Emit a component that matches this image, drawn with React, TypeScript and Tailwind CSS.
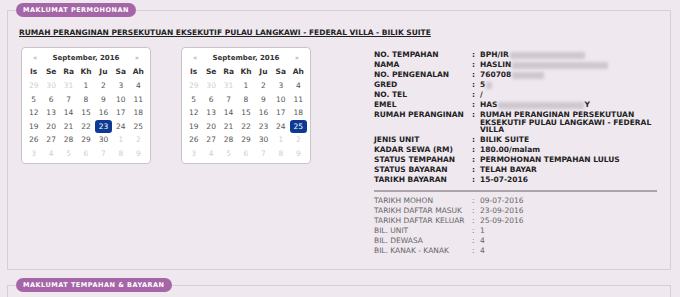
const weeks: number[][] = [
  [29, 30, 31, 1, 2, 3, 4],
  [5, 6, 7, 8, 9, 10, 11],
  [12, 13, 14, 15, 16, 17, 18],
  [19, 20, 21, 22, 23, 24, 25],
  [26, 27, 28, 29, 30, 1, 2],
  [3, 4, 5, 6, 7, 8, 9],
];

const dayNames = ["Is", "Se", "Ra", "Kh", "Ju", "Sa", "Ah"];

function Calendar({ selected }: { selected: number }) {
  return (
    <div className="w-[130px] h-[117px] rounded-[4px] border border-[#c9c4c9] bg-white px-[3px] pt-[4px]">
      <div className="flex h-[13px] items-center justify-between px-[8px] text-[#333]">
        <span className="text-[7px] text-[#999]">«</span>
        <span className="font-bold text-[7px]">September, 2016</span>
        <span className="text-[7px] text-[#999]">»</span>
      </div>
      <div className="grid grid-cols-7 h-[14px] items-center text-center font-bold text-[7.5px] text-[#333]">
        {dayNames.map((d) => (
          <span key={d}>{d}</span>
        ))}
      </div>
      {weeks.map((w, wi) => (
        <div key={wi} className="grid grid-cols-7 h-[13.5px] items-center text-center text-[7.5px]">
          {w.map((n, i) => {
            const other = (wi === 0 && n > 20) || (wi >= 4 && n < 15);
            const isSel = !other && n === selected;
            return (
              <span key={i} className="flex justify-center">
                <span
                  className={
                    isSel
                      ? "flex h-[13px] w-[18px] items-center justify-center rounded-[3px] bg-[#0c3a92] text-white"
                      : other
                      ? "text-[#cfcfcf]"
                      : "text-[#555]"
                  }
                >
                  {n}
                </span>
              </span>
            );
          })}
        </div>
      ))}
    </div>
  );
}

function Blur({ w }: { w: number }) {
  return (
    <span
      className="ml-[1px] inline-block h-[7px] align-middle rounded-[1px] bg-[#cfc7cf] blur-[1.5px]"
      style={{ width: w }}
    />
  );
}

function Row({
  label,
  children,
  light,
}: {
  label: string;
  children: React.ReactNode;
  light?: boolean;
}) {
  return (
    <div className={"flex py-[1.25px] leading-[7.5px] " + (light ? "font-normal text-[#666]" : "font-bold text-[#222]")}>
      <span className="w-[98px] shrink-0">{label}</span>
      <span className="w-[8px] shrink-0">:</span>
      <span className="w-[180px]">{children}</span>
    </div>
  );
}

function Pill({ children }: { children: React.ReactNode }) {
  return (
    <legend className="h-[14px] rounded-full bg-[#a466a6] px-[7px] text-[6.5px] font-bold leading-[14px] tracking-[0.5px] text-white">
      {children}
    </legend>
  );
}

export default function App() {
  return (
    <div className="h-[297px] w-[680px] overflow-hidden bg-[#efe8ef] pt-[3px] text-[7.5px] font-['DejaVu_Sans',sans-serif]">
      <fieldset className="ml-[7px] h-[267px] w-[664px] border border-[#d6ced6] px-[8px]">
        <Pill>MAKLUMAT PERMOHONAN</Pill>
        <div className="mt-[11px] pl-[3px] font-bold text-[7.5px] leading-[10px] text-[#222] underline underline-offset-[1px]">
          RUMAH PERANGINAN PERSEKUTUAN EKSEKUTIF PULAU LANGKAWI - FEDERAL VILLA - BILIK SUITE
        </div>
        <div className="mt-[9px] flex">
          <div className="ml-[5px] flex gap-[30px]">
            <Calendar selected={23} />
            <Calendar selected={25} />
          </div>
          <div className="ml-[63px] mt-[3px]">
            <Row label="NO. TEMPAHAN">
              BPH/IR<Blur w={75} />
            </Row>
            <Row label="NAMA">
              HASLIN<Blur w={96} />
            </Row>
            <Row label="NO. PENGENALAN">
              760708<Blur w={32} />
            </Row>
            <Row label="GRED">
              5<Blur w={6} />
            </Row>
            <Row label="NO. TEL">/</Row>
            <Row label="EMEL">
              HAS<Blur w={86} />Y
            </Row>
            <Row label="RUMAH PERANGINAN">
              RUMAH PERANGINAN PERSEKUTUAN EKSEKUTIF PULAU LANGKAWI - FEDERAL VILLA
            </Row>
            <Row label="JENIS UNIT">BILIK SUITE</Row>
            <Row label="KADAR SEWA (RM)">180.00/malam</Row>
            <Row label="STATUS TEMPAHAN">PERMOHONAN TEMPAHAN LULUS</Row>
            <Row label="STATUS BAYARAN">TELAH BAYAR</Row>
            <Row label="TARIKH BAYARAN">15-07-2016</Row>
            <div className="mb-[4px] mt-[5px] w-[283px] border-t-2 border-[#a9a4a9]" />
            <Row light label="TARIKH MOHON">09-07-2016</Row>
            <Row light label="TARIKH DAFTAR MASUK">23-09-2016</Row>
            <Row light label="TARIKH DAFTAR KELUAR">25-09-2016</Row>
            <Row light label="BIL. UNIT">1</Row>
            <Row light label="BIL. DEWASA">4</Row>
            <Row light label="BIL. KANAK - KANAK">4</Row>
          </div>
        </div>
      </fieldset>
      <fieldset className="ml-[7px] mt-[8px] h-[40px] w-[664px] border border-[#d6ced6] px-[8px]">
        <Pill>MAKLUMAT TEMPAHAN &amp; BAYARAN</Pill>
      </fieldset>
    </div>
  );
}
